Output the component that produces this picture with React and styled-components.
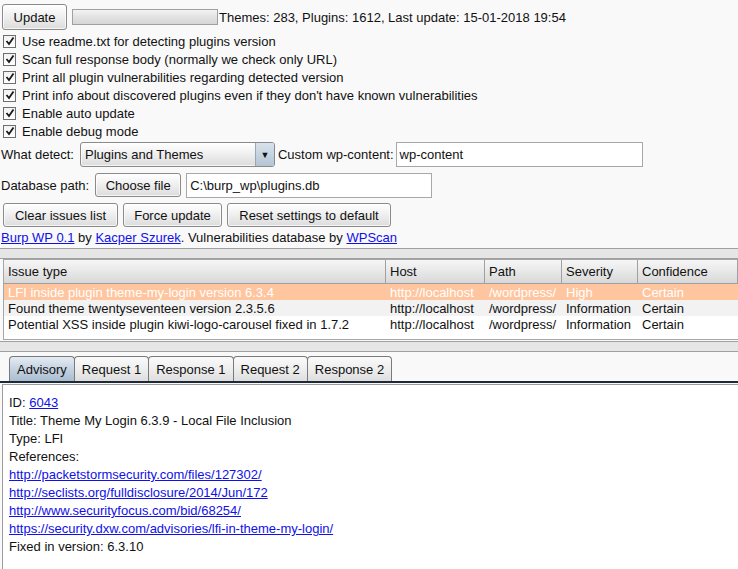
import React from "react"
import styled, { createGlobalStyle, css } from "styled-components"

const Global = createGlobalStyle`
  html, body {
    margin: 0;
    padding: 0;
    background: #f9f9f9;
  }
  body {
    font-family: "Liberation Sans", Arial, sans-serif;
    font-size: 13px;
    color: #111;
    overflow: hidden;
  }
`

const Page = styled.div`
  width: 738px;
  height: 569px;
  display: flex;
  flex-direction: column;
  overflow: hidden;
`

const Top = styled.div`
  display: flex;
  flex-direction: column;
  padding: 4px 0 0 0;
  height: 244px;
`

const Row = styled.div`
  display: flex;
  align-items: center;
  height: ${p => p.h || 18}px;
  margin-top: ${p => p.mt || 0}px;
  padding-left: ${p => p.pl || 0}px;
  gap: ${p => p.gap || 0}px;
  white-space: nowrap;
`

const buttonLook = css`
  font-family: inherit;
  font-size: 13px;
  color: #111;
  border: 1px solid #8a8a8a;
  border-radius: 3px;
  background: linear-gradient(#ffffff, #f0f0f0 45%, #dcdcdc);
  box-shadow: inset 0 0 0 1px rgba(255, 255, 255, 0.7);
  padding: 0;
`

const Button = styled.button`
  ${buttonLook};
  width: ${p => p.w}px;
  height: ${p => p.h || 24}px;
  margin-left: ${p => p.ml || 0}px;
`

const Progress = styled.div`
  width: 144px;
  height: 14px;
  border: 1px solid #a0a0a0;
  background: linear-gradient(#f4f4f4, #e2e2e2 50%, #d6d6d6);
  margin: 0 1px 0 5px;
`

const CheckRow = styled.label`
  display: flex;
  align-items: center;
  height: 18px;
  padding-left: 3px;
  gap: 6px;
  white-space: nowrap;
`

const Box = styled.span`
  width: 11px;
  height: 11px;
  border: 1px solid #6e6e6e;
  background: linear-gradient(#f2f2f2, #ffffff);
  display: flex;
  align-items: center;
  justify-content: center;
`

const Select = styled.div`
  ${buttonLook};
  width: 193px;
  height: 23px;
  margin-left: 6px;
  display: flex;
  align-items: stretch;
  overflow: hidden;
`

const SelectText = styled.span`
  flex: 1;
  display: flex;
  align-items: center;
  padding-left: 4px;
`

const Arrow = styled.span`
  width: 18px;
  border-left: 1px solid #9aa7b4;
  background: linear-gradient(#d8e2ec, #b4c4d4);
  display: flex;
  align-items: center;
  justify-content: center;
  font-size: 9px;
`

const Label = styled.span`
  margin-left: ${p => p.ml || 0}px;
`

const Input = styled.div`
  width: ${p => p.w}px;
  height: ${p => p.h || 23}px;
  border: 1px solid #a8a8a8;
  background: #fff;
  display: flex;
  align-items: center;
  padding-left: 3px;
  box-sizing: border-box;
  margin-left: ${p => p.ml || 0}px;
`

const A = styled.a`
  color: #1010e8;
  text-decoration: underline;
`

const Divider = styled.div`
  height: ${p => p.h}px;
  margin-top: ${p => p.mt || 0}px;
  border-top: 1px solid #a0a0a0;
  border-bottom: 1px solid #a0a0a0;
  background: #e6e6e6;
  flex: none;
`

const TableWrap = styled.div`
  height: 79px;
  margin-left: 3px;
  border: 1px solid #a6a6a6;
  border-right: none;
  background: #fff;
  flex: none;
`

const cols = "382px 99px 77px 76px 1fr"

const Head = styled.div`
  display: grid;
  grid-template-columns: ${cols};
  height: 24px;
  background: linear-gradient(#f6f6f6, #e8e8e8 50%, #d8d8d8);
  border-bottom: 1px solid #a0a0a0;
  box-sizing: border-box;
`

const HeadCell = styled.div`
  display: flex;
  align-items: center;
  padding-left: 4px;
  border-right: 1px solid #a0a0a0;
`

const TRow = styled.div`
  display: grid;
  grid-template-columns: ${cols};
  height: 16px;
  align-items: center;
  background: ${p => (p.sel ? "#ffc59e" : p.alt ? "#f2f2f2" : "#fff")};
  color: ${p => (p.sel ? "#fff" : "#111")};
`

const Cell = styled.div`
  padding-left: 4px;
  white-space: nowrap;
  overflow: hidden;
`

const TabBar = styled.div`
  display: flex;
  align-items: flex-end;
  height: 29px;
  padding-left: 9px;
  border-bottom: 2px solid #1f2a38;
  flex: none;
`

const Tab = styled.div`
  height: 24px;
  padding: 0 7px;
  display: flex;
  align-items: center;
  border: 1px solid #7a7a7a;
  border-bottom: none;
  border-radius: 4px 4px 0 0;
  margin-right: -1px;
  background: ${p =>
    p.active
      ? "linear-gradient(#e4ecf3, #c4d3e1 50%, #a9bdd0)"
      : "linear-gradient(#fafafa, #eeeeee 50%, #dedede)"};
`

const Content = styled.div`
  flex: 1;
  margin: 1px 0 0 2px;
  border-left: 1px solid #9c9c9c;
  border-top: 1px solid #9c9c9c;
  background: #fff;
  padding: 9px 0 0 6px;
`

const Line = styled.div`
  height: 18px;
  line-height: 18px;
  white-space: nowrap;
`

const Check = () => (
  <Box>
    <svg width="10" height="10" viewBox="0 0 10 10">
      <path d="M1.5 5 L4 8 L8.5 1.5" fill="none" stroke="#1a1a1a" strokeWidth="1.8" />
    </svg>
  </Box>
)

const options = [
  "Use readme.txt for detecting plugins version",
  "Scan full response body (normally we check only URL)",
  "Print all plugin vulnerabilities regarding detected version",
  "Print info about discovered plugins even if they don't have known vulnerabilities",
  "Enable auto update",
  "Enable debug mode",
]

const issues = [
  ["LFI inside plugin theme-my-login version 6.3.4", "High"],
  ["Found theme twentyseventeen version 2.3.5.6", "Information"],
  ["Potential XSS inside plugin kiwi-logo-carousel fixed in 1.7.2", "Information"],
]

const refs = [
  "http://packetstormsecurity.com/files/127302/",
  "http://seclists.org/fulldisclosure/2014/Jun/172",
  "http://www.securityfocus.com/bid/68254/",
  "https://security.dxw.com/advisories/lfi-in-theme-my-login/",
]

const App = () => (
  <Page>
    <Global />
    <Top>
      <Row h={26} pl={2}>
        <Button w={65} h={26}>Update</Button>
        <Progress />
        <span>Themes: 283, Plugins: 1612, Last update: 15-01-2018 19:54</span>
      </Row>
      <div style={{ height: 2 }} />
      {options.map(o => (
        <CheckRow key={o}>
          <Check />
          {o}
        </CheckRow>
      ))}
      <Row h={25} mt={2} pl={1}>
        <span>What detect:</span>
        <Select>
          <SelectText>Plugins and Themes</SelectText>
          <Arrow>▼</Arrow>
        </Select>
        <Label ml={3}>Custom wp-content:</Label>
        <Input w={247} h={25} ml={2}>wp-content</Input>
      </Row>
      <Row h={24} mt={6} pl={1}>
        <span>Database path:</span>
        <Button w={86} ml={6}>Choose file</Button>
        <Input w={246} h={25} ml={5}>C:\burp_wp\plugins.db</Input>
      </Row>
      <Row h={24} mt={6} pl={3} gap={5}>
        <Button w={115}>Clear issues list</Button>
        <Button w={99}>Force update</Button>
        <Button w={164}>Reset settings to default</Button>
      </Row>
      <Row h={17} mt={2} pl={1}>
        <A>Burp WP 0.1</A>&nbsp;by&nbsp;<A>Kacper Szurek</A>. Vulnerabilities database by&nbsp;<A>WPScan</A>
      </Row>
    </Top>
    <Divider h={9} />
    <TableWrap>
      <Head>
        {["Issue type", "Host", "Path", "Severity", "Confidence"].map(h => (
          <HeadCell key={h}>{h}</HeadCell>
        ))}
      </Head>
      {issues.map(([name, sev], i) => (
        <TRow key={name} sel={i === 0} alt={i === 1}>
          <Cell>{name}</Cell>
          <Cell>http://localhost</Cell>
          <Cell>/wordpress/</Cell>
          <Cell>{sev}</Cell>
          <Cell>Certain</Cell>
        </TRow>
      ))}
    </TableWrap>
    <Divider h={9} mt={1} />
    <TabBar>
      <Tab active>Advisory</Tab>
      <Tab>Request 1</Tab>
      <Tab>Response 1</Tab>
      <Tab>Request 2</Tab>
      <Tab>Response 2</Tab>
    </TabBar>
    <Content>
      <Line>ID: <A>6043</A></Line>
      <Line>Title: Theme My Login 6.3.9 - Local File Inclusion</Line>
      <Line>Type: LFI</Line>
      <Line>References:</Line>
      {refs.map(r => (
        <Line key={r}><A>{r}</A></Line>
      ))}
      <Line>Fixed in version: 6.3.10</Line>
    </Content>
  </Page>
)

export default App
